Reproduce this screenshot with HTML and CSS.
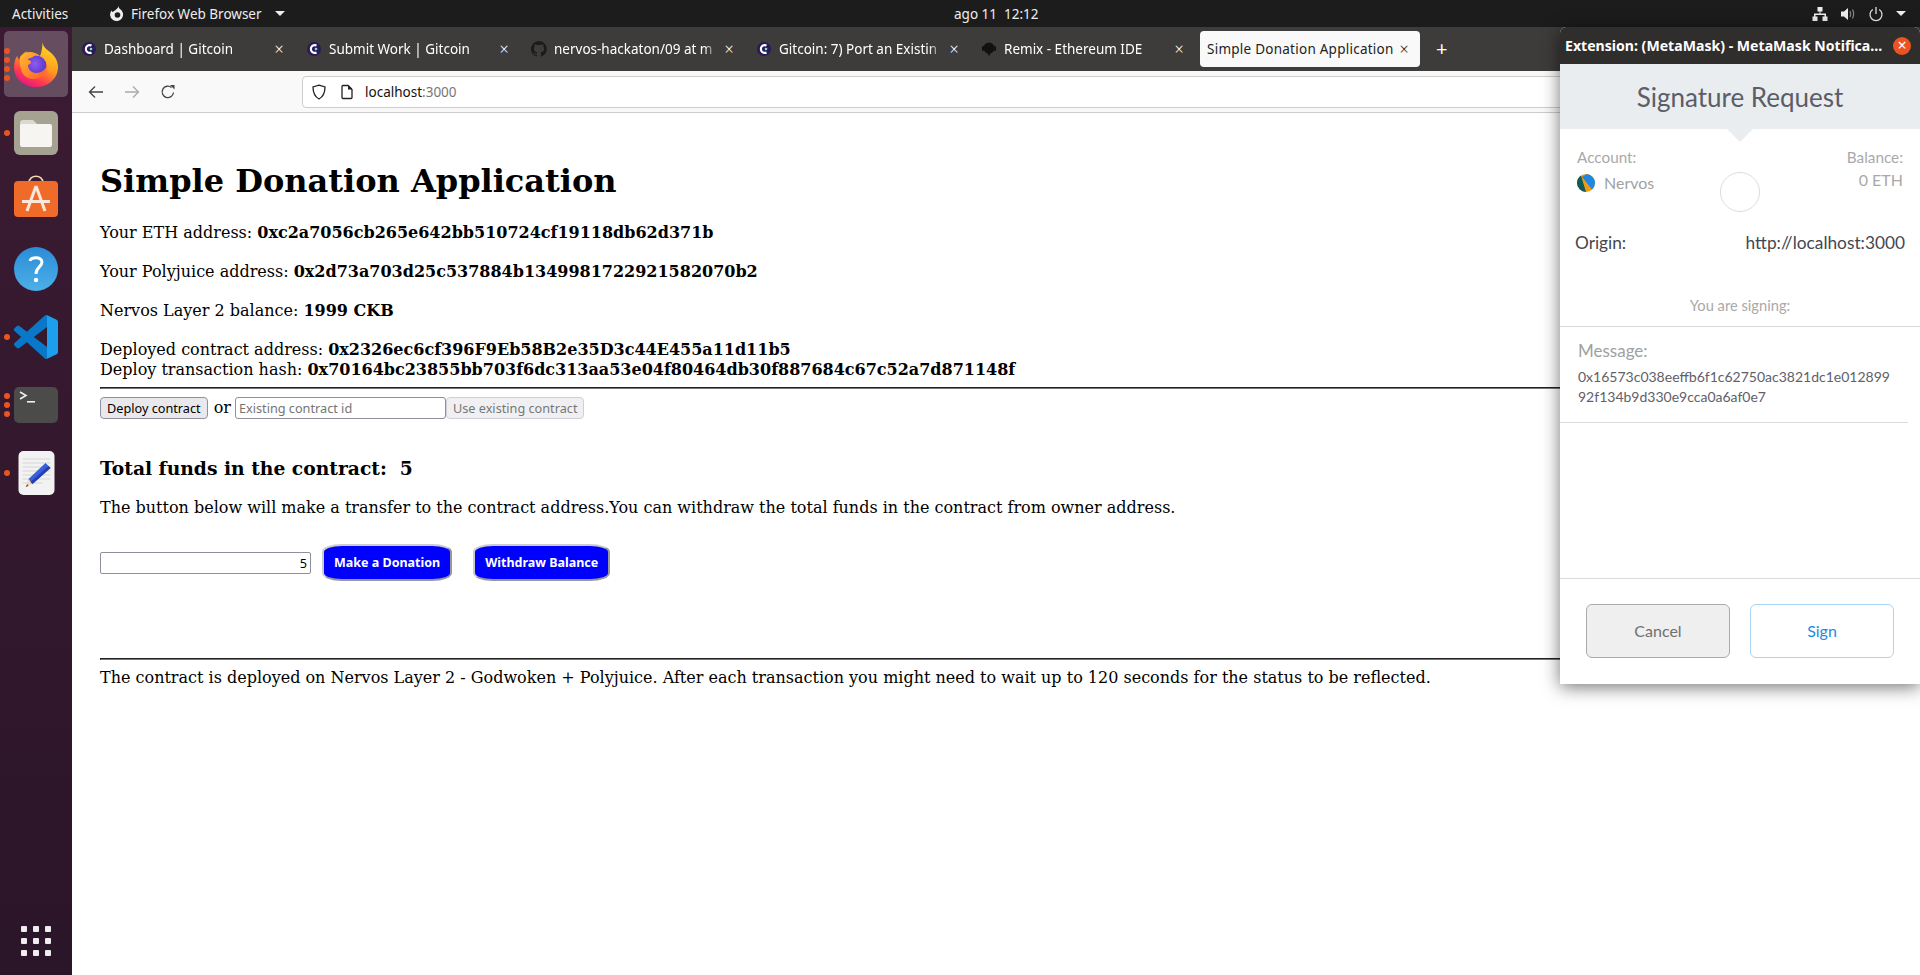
FILE: index.html
```html
<!DOCTYPE html>
<html>
<head>
    <title>Simple Donation Application</title>
    <link rel="stylesheet" href="styles.css">
</head>
<body>
    <header class="topbar">
        <span class="activities">Activities</span>
        <span class="app-menu">
            <svg class="app-icon" viewBox="0 0 16 16"><path fill="#eee" d="M9 0c1 1 .5 2 2 3a6.500 6.500 0 1 1-8.500 1.500C3 5 3 6 4 6c1-1.500 3-1.500 3-2.500C8 2.500 9.500 2 9 0z"/><circle cx="8.500" cy="9" r="2.800" fill="#1d1d1d"/></svg>
            Firefox Web Browser
            <span class="caret"></span>
        </span>
        <span class="clock">ago 11&nbsp;&nbsp;12:12</span>
        <span class="tray">
            <svg class="tray-icon" viewBox="0 0 16 16"><path fill="#eee" d="M5.500 1h5v4.500h-2V7.500H14v3h1.500V15h-5v-4.500H12.500V9h-9v1.500H5.500V15h-5v-4.500H2v-3h5.500v-2h-2z"/></svg>
            <svg class="tray-icon" viewBox="0 0 16 16"><path fill="#eee" d="M1 5.500h3L8 2v12l-4-3.500H1z"/><path fill="none" stroke="#888" stroke-width="1.200" d="M10 5c1 2 1 4 0 6M12.500 3.500c1.500 3 1.500 6 0 9"/></svg>
            <svg class="tray-icon" viewBox="0 0 16 16"><path fill="none" stroke="#eee" stroke-width="1.200" d="M8 1v7M4.800 3.500a6 6 0 1 0 6.400 0"/></svg>
            <span class="caret"></span>
        </span>
    </header>

    <div class="desktop">
        <nav class="dock">
            <div class="dock-item active">
                <span class="pips"><i></i><i></i><i></i><i></i></span>
                <svg class="dock-icon ff" viewBox="0 0 48 48">
                    <defs>
                        <linearGradient id="ffbody" x1="0.800" y1="0" x2="0.300" y2="1"><stop offset="0" stop-color="#ffe226"/><stop offset="0.500" stop-color="#ff9a1f"/><stop offset="0.800" stop-color="#ff3750"/><stop offset="1" stop-color="#e31587"/></linearGradient>
                        <radialGradient id="ffglobe" cx="0.450" cy="0.400" r="0.700"><stop offset="0" stop-color="#8f5cf0"/><stop offset="1" stop-color="#4a2bc0"/></radialGradient>
                        <linearGradient id="fffox" x1="0" y1="0" x2="1" y2="1"><stop offset="0" stop-color="#ffbd2e"/><stop offset="1" stop-color="#ff5a2a"/></linearGradient>
                    </defs>
                    <path fill="url(#ffbody)" d="M31 1c-1 5 3 8 7 11 5 4 8 9 8 15 0 12-10 20-22 20S2 39 2 27c0-4 1-8 3-11l2 4c1-4 4-7 8-9-1 2-1 3 0 4 3-2 8-2 13 1 2-4 2-10 3-15z"/>
                    <circle cx="24" cy="26" r="10.500" fill="url(#ffglobe)"/>
                    <path fill="url(#fffox)" d="M8 17c3-3 6-5 10-5 3 0 6 1 9 3-2 0-5 0-6 2-1 1-4 1-6 2 2 1 4 2 4 3 0 2-2 2-3 3 0 4 3 8 8 8 5 0 10-3 11-9 1 6-3 15-13 15S7 32 8 17z"/>
                </svg>
            </div>
            <div class="dock-item">
                <span class="pips"><i></i></span>
                <svg class="dock-icon" viewBox="0 0 44 44">
                    <rect width="44" height="44" rx="6" fill="#a6a292"/>
                    <path fill="#dbd8ce" d="M6 12a3 3 0 0 1 3-3h10l4 4v8H6z"/>
                    <path fill="#f6f5f2" d="M6 15a2 2 0 0 1 2-2h28a2 2 0 0 1 2 2v19a2 2 0 0 1-2 2H8a2 2 0 0 1-2-2z"/>
                </svg>
            </div>
            <div class="dock-item">
                <svg class="dock-icon store" viewBox="0 0 44 42">
                    <path fill="none" stroke="#f3d9b5" stroke-width="1.600" d="M15 8c0-9 14-9 14 0"/>
                    <rect y="6" width="44" height="36" rx="4" fill="#f06a2a"/>
                    <path fill="none" stroke="#fbe8dd" stroke-width="3" d="M22 11 13 36M22 11l9 25"/>
                    <rect x="8" y="25" width="28" height="3" fill="#fbe8dd"/>
                </svg>
            </div>
            <div class="dock-item">
                <svg class="dock-icon" viewBox="0 0 44 44">
                    <defs><linearGradient id="helpblue" x1="0" y1="0" x2="0" y2="1"><stop offset="0" stop-color="#2b8cd6"/><stop offset="1" stop-color="#4cb0e8"/></linearGradient></defs>
                    <circle cx="22" cy="22" r="22" fill="url(#helpblue)"/>
                    <path fill="none" stroke="#fff" stroke-width="3" d="M16 14c1-4 11-5 12 1 0 5-6 5-6 12"/>
                    <circle cx="22" cy="33" r="2.200" fill="#fff"/>
                </svg>
            </div>
            <div class="dock-item">
                <span class="pips"><i></i></span>
                <svg class="dock-icon" viewBox="0 0 24 24">
                    <path fill="#0a78c8" d="M23.150 2.587 18.210.21a1.494 1.494 0 0 0-1.705.29l-9.460 8.630-4.120-3.128a.999.999 0 0 0-1.276.057L.327 7.261A1 1 0 0 0 .326 8.740L3.899 12 .326 15.260a1 1 0 0 0 .001 1.479L1.650 17.940a.999.999 0 0 0 1.276.057l4.120-3.128 9.460 8.630a1.492 1.492 0 0 0 1.704.29l4.942-2.377A1.500 1.500 0 0 0 24 20.060V3.939a1.500 1.500 0 0 0-.85-1.352zm-5.146 14.861L10.826 12l7.178-5.448v10.896z"/>
                    <path fill="#1c9fec" d="M18 .1l5.150 2.487A1.500 1.500 0 0 1 24 3.939V20.060a1.500 1.500 0 0 1-.85 1.352L18 23.900z"/>
                </svg>
            </div>
            <div class="dock-item">
                <span class="pips"><i></i><i></i><i></i></span>
                <svg class="dock-icon" viewBox="0 0 44 36">
                    <rect width="44" height="36" rx="5" fill="#4b4b49"/>
                    <path fill="none" stroke="#f0f0f0" stroke-width="1.600" d="M6 5l6 3.500-6 3.500"/>
                    <rect x="13" y="14" width="8" height="1.600" fill="#f0f0f0"/>
                </svg>
            </div>
            <div class="dock-item">
                <span class="pips"><i></i></span>
                <svg class="dock-icon editor" viewBox="0 0 36 44">
                    <rect width="36" height="44" rx="5" fill="#f2f2f2"/>
                    <path stroke="#d5d5d5" d="M4 8h28M4 12h28M4 16h28M4 20h28M4 24h28M4 28h28M4 32h20"/>
                    <path fill="#f7d9b8" d="M10 28l4 5-7 3z"/>
                    <path fill="#3a5fd8" d="M10 28 27 12l5 5-18 16z"/>
                    <path fill="#2340b0" d="M12 31 30 15l2 2-18 16z"/>
                    <path fill="#555" d="M7 36l2-3 1 2z"/>
                </svg>
            </div>
            <div class="app-grid">
                <i></i><i></i><i></i><i></i><i></i><i></i><i></i><i></i><i></i>
            </div>
        </nav>

        <div class="browser">
            <div class="tabs">
                <div class="tab">
                    <svg class="favicon" viewBox="0 0 16 16"><circle cx="8" cy="8" r="7" fill="#2b1a5a"/><path fill="#fff" d="M11 3.500a5 5 0 1 0 0 9l-1-2a2.800 2.800 0 1 1 0-5z"/><circle cx="10" cy="8" r="1.300" fill="#7ee0c0"/></svg>
                    <span class="tab-title">Dashboard | Gitcoin</span>
                    <span class="tab-close">&times;</span>
                </div>
                <div class="tab">
                    <svg class="favicon" viewBox="0 0 16 16"><circle cx="8" cy="8" r="7" fill="#2b1a5a"/><path fill="#fff" d="M11 3.500a5 5 0 1 0 0 9l-1-2a2.800 2.800 0 1 1 0-5z"/><circle cx="10" cy="8" r="1.300" fill="#7ee0c0"/></svg>
                    <span class="tab-title">Submit Work | Gitcoin</span>
                    <span class="tab-close">&times;</span>
                </div>
                <div class="tab">
                    <svg class="favicon" viewBox="0 0 16 16"><path fill="#1b1b1b" d="M8 0a8 8 0 0 0-2.500 15.600c.4.100.5-.2.500-.4v-1.400c-2.200.5-2.700-1-2.700-1-.4-.9-.9-1.200-.9-1.200-.7-.5.100-.5.100-.5.800.100 1.200.8 1.200.8.700 1.200 1.900.9 2.300.7.100-.5.300-.9.500-1.100-1.800-.2-3.600-.9-3.600-4 0-.9.300-1.600.8-2.100-.1-.2-.4-1 .1-2.100 0 0 .7-.2 2.200.8a7.600 7.600 0 0 1 4 0c1.500-1 2.200-.8 2.200-.8.400 1.100.2 1.900.1 2.100.5.600.8 1.300.8 2.100 0 3.100-1.900 3.700-3.700 3.900.3.300.6.800.6 1.500v2.200c0 .2.100.5.600.4A8 8 0 0 0 8 0z"/></svg>
                    <span class="tab-title">nervos-hackaton/09 at m</span>
                    <span class="tab-close">&times;</span>
                </div>
                <div class="tab">
                    <svg class="favicon" viewBox="0 0 16 16"><circle cx="8" cy="8" r="7" fill="#2b1a5a"/><path fill="#fff" d="M11 3.500a5 5 0 1 0 0 9l-1-2a2.800 2.800 0 1 1 0-5z"/><circle cx="10" cy="8" r="1.300" fill="#7ee0c0"/></svg>
                    <span class="tab-title">Gitcoin: 7) Port an Existin</span>
                    <span class="tab-close">&times;</span>
                </div>
                <div class="tab">
                    <svg class="favicon" viewBox="0 0 16 16"><circle cx="8" cy="7" r="5.500" fill="#111"/><rect x="1" y="5" width="2" height="5" rx="1" fill="#111"/><rect x="13" y="5" width="2" height="5" rx="1" fill="#111"/><path fill="#111" d="M6.500 12h3L8 15.500z"/></svg>
                    <span class="tab-title">Remix - Ethereum IDE</span>
                    <span class="tab-close">&times;</span>
                </div>
                <div class="tab selected">
                    <span class="tab-title">Simple Donation Application</span>
                    <span class="tab-close">&times;</span>
                </div>
                <span class="new-tab">+</span>
            </div>

            <div class="toolbar">
                <svg class="nav-icon" viewBox="0 0 16 16"><path fill="none" stroke="#444" stroke-width="1.300" d="M15 8H1.500M7 2.500 1.500 8 7 13.500"/></svg>
                <svg class="nav-icon" viewBox="0 0 16 16"><path fill="none" stroke="#aaa" stroke-width="1.300" d="M1 8h13.500M9 2.500 14.500 8 9 13.500"/></svg>
                <svg class="nav-icon" viewBox="0 0 16 16"><path fill="none" stroke="#444" stroke-width="1.300" d="M13.500 8.500A5.700 5.700 0 1 1 11.500 3.500"/><path fill="#444" d="M10 1h4.500v4.500z"/></svg>
                <div class="urlbar">
                    <svg class="url-icon" viewBox="0 0 16 16"><path fill="none" stroke="#222" stroke-width="1.300" d="M8 1.200 14 3c0 6-1.500 9.500-6 12C3.500 12.500 2 9 2 3z"/></svg>
                    <svg class="url-icon" viewBox="0 0 16 16"><path fill="none" stroke="#222" stroke-width="1.300" d="M3 2.500a1 1 0 0 1 1-1h5l4 4v8a1 1 0 0 1-1 1H4a1 1 0 0 1-1-1z"/><path fill="#222" d="M9 1.500h1l3 3v1H9z"/></svg>
                    <span class="url">localhost<span class="url-port">:3000</span></span>
                </div>
            </div>

            <main class="page">
                <h1>Simple Donation Application</h1>
                <p>Your ETH address: <b>0xc2a7056cb265e642bb510724cf19118db62d371b</b></p>
                <p>Your Polyjuice address: <b>0x2d73a703d25c537884b1349981722921582070b2</b></p>
                <p>Nervos Layer 2 balance: <b>1999 CKB</b></p>
                <p class="hashes">Deployed contract address: <b>0x2326ec6cf396F9Eb58B2e35D3c44E455a11d11b5</b><br>Deploy transaction hash: <b>0x70164bc23855bb703f6dc313aa53e04f80464db30f887684c67c52a7d871148f</b></p>
                <hr>
                <div class="deploy-row">
                    <button class="native-btn">Deploy contract</button>
                    <span class="or">or</span>
                    <input class="contract-input" placeholder="Existing contract id">
                    <button class="native-btn" disabled>Use existing contract</button>
                </div>
                <h3>Total funds in the contract:&nbsp; 5</h3>
                <p class="note">The button below will make a transfer to the contract address.You can withdraw the total funds in the contract from owner address.</p>
                <div class="donate-row">
                    <input class="amount-input" value="5">
                    <button class="blue-btn">Make a Donation</button>
                    <button class="blue-btn">Withdraw Balance</button>
                </div>
                <hr class="footer-rule">
                <div class="footer-note">The contract is deployed on Nervos Layer 2 - Godwoken + Polyjuice. After each transaction you might need to wait up to 120 seconds for the status to be reflected.</div>
            </main>
        </div>
    </div>

    <section class="mm-window">
        <div class="mm-titlebar">
            <span class="mm-wintitle">Extension: (MetaMask) - MetaMask Notifica...</span>
            <span class="mm-close">&times;</span>
        </div>
        <div class="mm-header">Signature Request</div>
        <div class="mm-account">
            <div>
                <div class="mm-label">Account:</div>
                <div class="mm-name">
                    <svg class="mm-avatar" viewBox="0 0 18 18"><circle cx="9" cy="9" r="9" fill="#f59a0c"/><path fill="#0d5c5a" d="M0 9a9 9 0 0 1 4-7.500l5 16.500A9 9 0 0 1 0 9z"/><path fill="#1f88e5" d="M5 3 10 0a9 9 0 0 1 8 9 9 9 0 0 1-3 6.500z"/></svg>
                    Nervos
                </div>
            </div>
            <div class="mm-balance">
                <div class="mm-label">Balance:</div>
                <div class="mm-eth">0 ETH</div>
            </div>
            <span class="mm-spinner"></span>
        </div>
        <div class="mm-origin"><span>Origin:</span><span>http://localhost:3000</span></div>
        <div class="mm-signing">You are signing:</div>
        <div class="mm-message">
            <div class="mm-msg-label">Message:</div>
            <div class="mm-msg-value">0x16573c038eeffb6f1c62750ac3821dc1e012899<br>92f134b9d330e9cca0a6af0e7</div>
        </div>
        <div class="mm-actions">
            <button class="mm-btn mm-cancel">Cancel</button>
            <button class="mm-btn mm-sign">Sign</button>
        </div>
    </section>
</body>
</html>
```

FILE: styles.css
```css
* {
    box-sizing: border-box;
}

html, body {
    height: 100%;
}

body {
    margin: 0;
    overflow: hidden;
    font-family: "Noto Sans", sans-serif;
    background-color: #fff;
}

/* gnome top bar */
.topbar {
    height: 27px;
    display: flex;
    align-items: center;
    padding-left: 12px;
    background-color: #1c1c1c;
    color: #eee;
    font-size: 13.5px;
}

.activities {
    width: 97px;
}

.app-menu {
    display: flex;
    align-items: center;
    width: 179px;
    gap: 6px;
}

.app-icon {
    width: 16px;
    height: 16px;
}

.caret {
    display: inline-block;
    margin-left: 7px;
    border-left: 5px solid transparent;
    border-right: 5px solid transparent;
    border-top: 5px solid #eee;
}

.clock {
    margin-left: 666px;
}

.tray {
    display: flex;
    align-items: center;
    gap: 12px;
    margin-left: auto;
    padding-right: 14px;
}

.tray .caret {
    margin-left: 0;
}

.tray-icon {
    width: 16px;
    height: 16px;
}

.desktop {
    display: flex;
    height: 948px;
}

/* ubuntu dock */
.dock {
    width: 72px;
    flex-shrink: 0;
    display: flex;
    flex-direction: column;
    align-items: center;
    padding-top: 4px;
    padding-bottom: 19px;
    background: linear-gradient(#3b1b33, #2b1528);
}

.dock-item {
    position: relative;
    width: 64px;
    height: 68px;
    display: flex;
    align-items: center;
    justify-content: center;
    border-radius: 5px;
}

.dock-item.active {
    height: 66px;
    margin-bottom: 2px;
    background-color: rgba(255, 255, 255, 0.22);
}

.dock-icon {
    width: 44px;
    height: 44px;
}

.dock-icon.ff {
    width: 48px;
    height: 48px;
}

.dock-icon.store {
    height: 42px;
    margin-bottom: 10px;
}

.dock-icon.editor {
    width: 37px;
}

.pips {
    position: absolute;
    left: 0;
    top: 0;
    bottom: 0;
    display: flex;
    flex-direction: column;
    justify-content: center;
    gap: 3px;
}

.pips i {
    display: block;
    width: 6px;
    height: 6px;
    border-radius: 50%;
    background-color: #e95420;
}

.app-grid {
    margin-top: auto;
    width: 30px;
    display: grid;
    grid-template-columns: repeat(3, 6px);
    justify-content: space-between;
    row-gap: 6px;
}

.app-grid i {
    width: 6px;
    height: 6px;
    border-radius: 1px;
    background-color: #eee;
}

.browser {
    flex: 1;
    min-width: 0;
    display: flex;
    flex-direction: column;
}

/* firefox tabs */
.tabs {
    height: 44px;
    display: flex;
    align-items: center;
    gap: 5px;
    padding-left: 3px;
    background-color: #3d3c3a;
    color: #fff;
    font-size: 13.5px;
}

.tab {
    width: 220px;
    height: 36px;
    flex-shrink: 0;
    display: flex;
    align-items: center;
    padding-left: 5px;
    border-radius: 4px;
}

.tab.selected {
    padding-left: 7px;
    background-color: #f9f9fa;
    color: #222;
}

.favicon {
    width: 16px;
    height: 16px;
    flex-shrink: 0;
    margin: 0 7px 0 1px;
}

.tab-title {
    flex: 1;
    overflow: hidden;
    white-space: nowrap;
    -webkit-mask-image: linear-gradient(to left, transparent, #000 14px);
    mask-image: linear-gradient(to left, transparent, #000 14px);
}

.tab.selected .tab-title {
    letter-spacing: 0.25px;
    -webkit-mask-image: none;
    mask-image: none;
}

.tab-close {
    width: 22px;
    margin-right: 5px;
    text-align: center;
    font-size: 16px;
    font-weight: 300;
}

.new-tab {
    margin-left: 11px;
    font-size: 20px;
    line-height: 1;
}

.toolbar {
    height: 42px;
    display: flex;
    align-items: center;
    gap: 20px;
    padding-left: 16px;
    background-color: #f9f9fa;
    border-bottom: 1px solid #ccc;
}

.nav-icon {
    width: 16px;
    height: 16px;
}

.urlbar {
    flex: 1;
    height: 32px;
    display: flex;
    align-items: center;
    gap: 12px;
    margin-left: 106px;
    margin-right: 10px;
    padding-left: 8px;
    background-color: #fff;
    border: 1px solid #ccc;
    border-radius: 4px;
}

.url-icon {
    width: 16px;
    height: 16px;
}

.url {
    margin-left: -2px;
    font-size: 13.5px;
    color: #111;
}

.url-port {
    color: #777;
}

/* the page itself */
.page {
    flex: 1;
    padding: 49px 28px 0;
    font-family: "DejaVu Serif", serif;
    font-size: 16px;
    line-height: 20px;
    color: #000;
}

h1 {
    margin: 0 0 23px;
    font-size: 32px;
    line-height: 38px;
}

p {
    margin: 0 0 19px;
}

p.hashes {
    margin-bottom: 7px;
}

hr {
    height: 2px;
    margin: 0 0 8px;
    border: 1px inset #777;
    background-color: #444;
}

.deploy-row {
    display: flex;
    align-items: center;
    height: 22px;
}

.native-btn {
    height: 22px;
    padding: 0 6px;
    background-color: #e9e9ed;
    border: 1px solid #8f8f9d;
    border-radius: 4px;
    font-family: "Noto Sans", sans-serif;
    font-size: 12.7px;
    color: #000;
}

.native-btn:disabled {
    background-color: #f0f0f3;
    border-color: #cfcfd8;
    color: #777;
}

.or {
    margin: 0 4px 0 6px;
}

.contract-input {
    width: 211px;
    height: 22px;
    padding: 0 3px;
    border: 1px solid #8f8f9d;
    border-radius: 3px;
    font-family: "Noto Sans", sans-serif;
    font-size: 12.7px;
}

h3 {
    margin: 38px 0 19px;
    font-size: 18.72px;
    line-height: 22px;
}

.note {
    margin-bottom: 26px;
}

.donate-row {
    display: flex;
    align-items: center;
    height: 37px;
}

.amount-input {
    width: 211px;
    height: 22px;
    padding: 0 3px;
    border: 1px solid #8f8f9d;
    border-radius: 2px;
    text-align: right;
    font-family: "Noto Sans", sans-serif;
    font-size: 12.7px;
}

.blue-btn {
    height: 37px;
    margin-left: 11px;
    margin-right: 10px;
    padding: 0 10px;
    background-color: #00f;
    border-width: 2px;
    border-style: solid;
    border-color: #ccc #999 #999 #ccc;
    border-radius: 20px / 8px;
    color: #fff;
    font-family: "Noto Sans", sans-serif;
    font-size: 12.5px;
    font-weight: 700;
}

.footer-rule {
    margin: 77px 0 8px;
}

/* metamask popup window */
.mm-window {
    position: absolute;
    left: 1560px;
    top: 27px;
    width: 360px;
    height: 657px;
    display: flex;
    flex-direction: column;
    background-color: #fff;
    border-radius: 6px 6px 0 0;
    box-shadow: 0 3px 18px rgba(0, 0, 0, 0.55);
    font-family: Lato, sans-serif;
}

.mm-titlebar {
    height: 37px;
    flex-shrink: 0;
    display: flex;
    align-items: center;
    justify-content: space-between;
    padding: 0 9px 0 5px;
    background-color: #302d2d;
    border-radius: 6px 6px 0 0;
    color: #fff;
    font-family: "Noto Sans", sans-serif;
    font-size: 14.1px;
    font-weight: 700;
    white-space: nowrap;
}

.mm-close {
    width: 18px;
    height: 18px;
    border-radius: 50%;
    background-color: #e95420;
    text-align: center;
    font-size: 16px;
    line-height: 17px;
    font-weight: 400;
}

.mm-header {
    position: relative;
    height: 65px;
    flex-shrink: 0;
    padding-top: 18px;
    background-color: #e9edf0;
    color: #5b5d67;
    text-align: center;
    font-size: 26px;
    line-height: 30px;
}

.mm-header::after {
    content: "";
    position: absolute;
    left: 167px;
    bottom: -13px;
    border-left: 13px solid transparent;
    border-right: 13px solid transparent;
    border-top: 13px solid #e9edf0;
}

.mm-account {
    position: relative;
    height: 101px;
    flex-shrink: 0;
    display: flex;
    justify-content: space-between;
    padding: 19px 17px 0;
}

.mm-label {
    color: #a9a9a9;
    font-size: 15.3px;
    line-height: 18px;
}

.mm-name {
    display: flex;
    align-items: center;
    gap: 9px;
    margin-top: 7px;
    color: #a2a2a2;
    font-size: 16px;
}

.mm-avatar {
    width: 18px;
    height: 18px;
}

.mm-balance {
    text-align: right;
}

.mm-eth {
    margin-top: 3px;
    color: #a9a9a9;
    font-size: 16px;
    line-height: 22px;
}

.mm-spinner {
    position: absolute;
    left: 160px;
    top: 43px;
    width: 40px;
    height: 40px;
    border: 1px solid #ddd;
    border-radius: 50%;
}

.mm-origin {
    height: 36px;
    flex-shrink: 0;
    display: flex;
    justify-content: space-between;
    padding: 3px 15px 0 15px;
    color: #44474f;
    font-size: 17.3px;
    line-height: 20px;
}

.mm-signing {
    height: 61px;
    flex-shrink: 0;
    padding-top: 30px;
    border-bottom: 1px solid #d8d8d8;
    color: #a9a9a9;
    font-size: 14.7px;
    line-height: 18px;
    text-align: center;
}

.mm-message {
    height: 96px;
    flex-shrink: 0;
    margin-right: 12px;
    padding: 14px 19px 0 18px;
    border-bottom: 1px solid #d8dbe0;
}

.mm-msg-label {
    color: #a0a0a0;
    font-size: 17px;
    line-height: 20px;
}

.mm-msg-value {
    margin-top: 6px;
    color: #5f6069;
    font-size: 14px;
    line-height: 20px;
}

.mm-actions {
    flex: 1;
    display: flex;
    gap: 20px;
    margin-top: 155px;
    padding: 25px 0 0 26px;
    border-top: 1px solid #d8dbe0;
}

.mm-btn {
    width: 144px;
    height: 54px;
    padding-bottom: 3px;
    border-radius: 6px;
    font-family: Lato, sans-serif;
    font-size: 16px;
}

.mm-cancel {
    background-color: #efefef;
    border: 1px solid #aaa;
    color: #6f6f73;
}

.mm-sign {
    background-color: #fff;
    border: 1px solid #a8d4f5;
    color: #1e8ae0;
}
```
